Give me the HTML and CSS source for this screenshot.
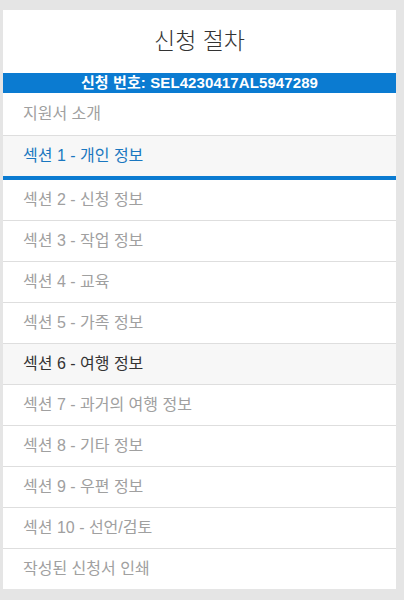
FILE: index.html
```html
<!DOCTYPE html>
<html lang="ko">
<head>
<meta charset="utf-8">
<title>신청 절차</title>
<link rel="stylesheet" href="styles.css">
</head>
<body>
<div class="panel">
  <h1 class="title">신청 절차</h1>
  <div class="app-no">신청 번호: SEL4230417AL5947289</div>
  <ul class="steps">
    <li class="step">지원서 소개</li>
    <li class="step active">섹션 1 - 개인 정보</li>
    <li class="step">섹션 2 - 신청 정보</li>
    <li class="step">섹션 3 - 작업 정보</li>
    <li class="step">섹션 4 - 교육</li>
    <li class="step">섹션 5 - 가족 정보</li>
    <li class="step hover">섹션 6 - 여행 정보</li>
    <li class="step">섹션 7 - 과거의 여행 정보</li>
    <li class="step">섹션 8 - 기타 정보</li>
    <li class="step">섹션 9 - 우편 정보</li>
    <li class="step">섹션 10 - 선언/검토</li>
    <li class="step last">작성된 신청서 인쇄</li>
  </ul>
</div>
</body>
</html>
```

FILE: styles.css
```css
html, body {
  margin: 0;
  padding: 0;
  background: #e5e5e5;
  font-family: "Liberation Sans", "Noto Sans CJK KR", sans-serif;
}
.panel {
  margin: 10px 8px 0 3px;
  background: #fff;
}
.title {
  margin: 0;
  height: 57px;
  padding-bottom: 6px;
  display: flex;
  align-items: center;
  justify-content: center;
  font-size: 23px;
  font-weight: 300;
  color: #333;
}
.app-no {
  height: 20px;
  line-height: 20px;
  background: #0b7bd1;
  color: #fff;
  font-weight: bold;
  font-size: 15px;
  letter-spacing: 0.1px;
  text-align: center;
}
.steps {
  list-style: none;
  margin: 0;
  padding: 0;
}
.step {
  height: 40px;
  line-height: 40px;
  padding-left: 20px;
  font-size: 16px;
  color: #a0a0a0;
  border-bottom: 1px solid #dedede;
}
.step:first-child {
  height: 42px;
  line-height: 42px;
}
.step.active {
  background: #f7f7f7;
  color: #1a77c0;
  border-bottom: 4px solid #0b7bd1;
}
.step.hover {
  background: #f7f7f7;
  color: #333;
}
.step.last {
  border-bottom: none;
}
```
